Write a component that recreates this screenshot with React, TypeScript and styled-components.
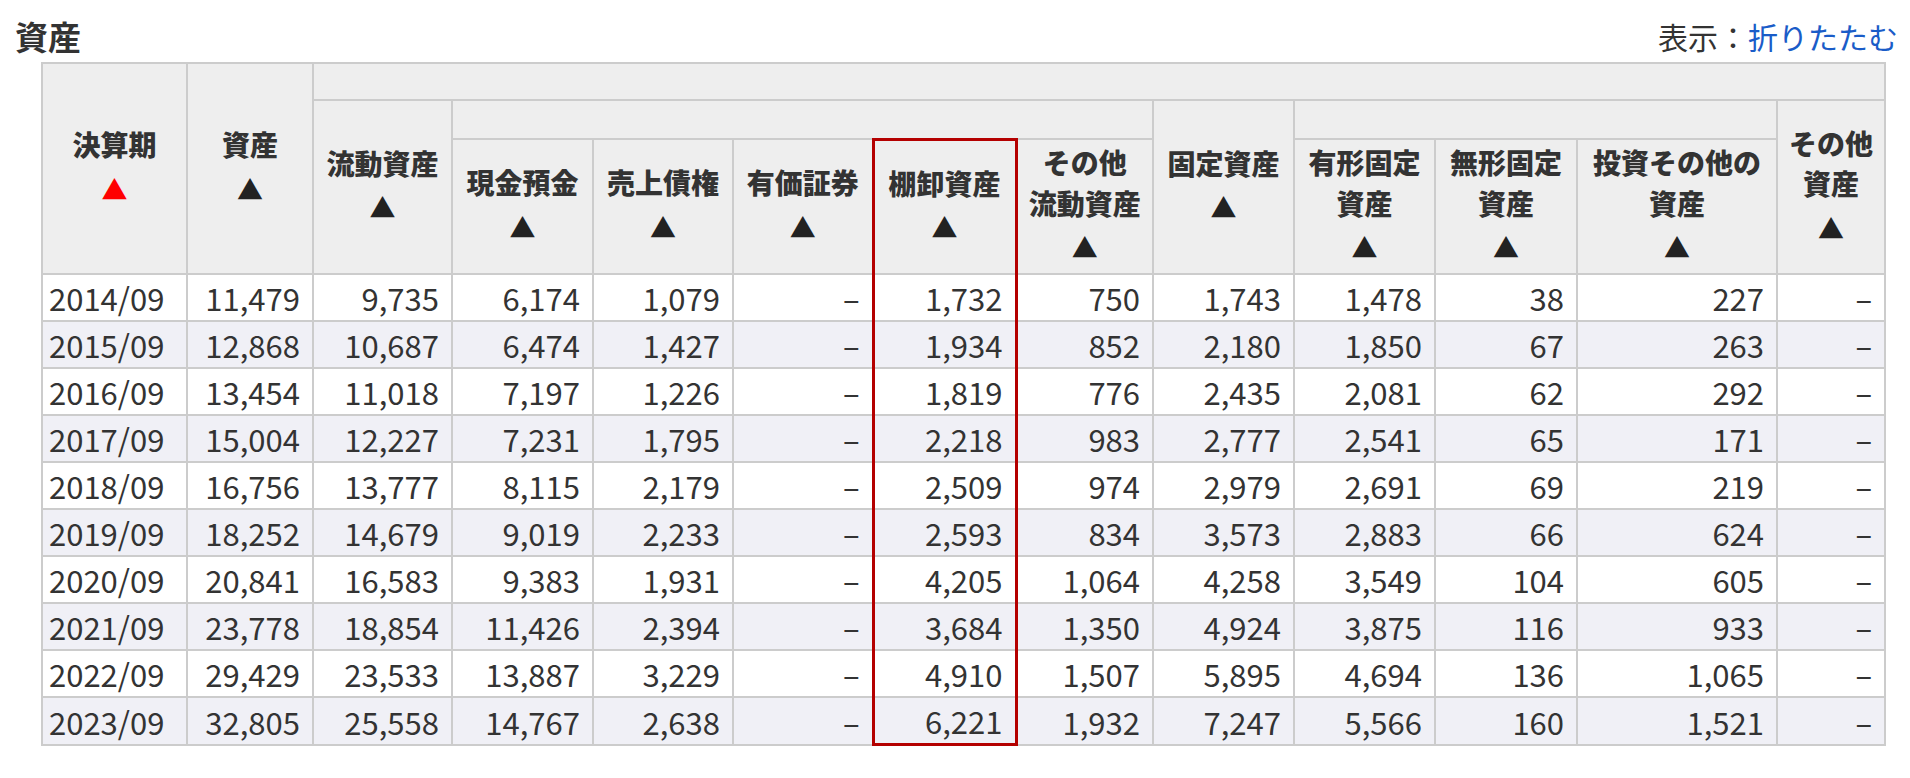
import React from "react";
import styled, { createGlobalStyle } from "styled-components";

const Global = createGlobalStyle`
  body { margin: 0; background: #fff; color: #333; font-family: "Noto Sans CJK JP", "Noto Sans", sans-serif; }
`;

const Page = styled.div`
  padding: 10px 12px 0 15px;
`;
const TitleBar = styled.div`
  display: flex;
  justify-content: space-between;
  align-items: center;
  height: 52px;
`;
const Title = styled.h2`
  margin: 0;
  font-size: 33px;
  font-weight: 700;
  color: #333;
`;
const Toggle = styled.div`
  font-size: 30px;
  color: #333;
  a { color: #1a5cc8; text-decoration: none; }
`;
const Table = styled.table`
  margin-left: 26px;
  border-collapse: collapse;
  width: 1843px;
  table-layout: fixed;
  font-size: 31px;
`;
const Th = styled.th<{ $red?: boolean }>`
  background: #eeeeee;
  border: 2px solid #cccccc;
  font-weight: 900;
  font-size: 28px;
  line-height: 1.45;
  color: #333;
  vertical-align: middle;
  padding: 2px 1px;
  white-space: nowrap;
  ${(p) => p.$red && `border: 3px solid #b40000; border-bottom: 2px solid #ccc;`}
`;
const Arrow = styled.span<{ $active?: boolean }>`
  display: block;
  color: ${(p) => (p.$active ? "#ff0000" : "#222")};
  font-size: 26px;
  line-height: 1.85;
`;
const Tr = styled.tr<{ $alt: boolean }>`
  background: ${(p) => (p.$alt ? "#f0f0f6" : "#ffffff")};
`;
const Td = styled.td<{ $red?: boolean; $last?: boolean; $left?: boolean }>`
  border: 2px solid #cccccc;
  height: 45px;
  padding: 0 12px 0 6px;
  text-align: ${(p) => (p.$left ? "left" : "right")};
  color: #333;
  white-space: nowrap;
  ${(p) => p.$red && `border-left: 3px solid #b40000; border-right: 3px solid #b40000;`}
  ${(p) => p.$red && p.$last && `border-bottom: 3px solid #b40000;`}
`;

const widths = [145, 126, 139, 141, 140, 140, 143, 137, 141, 141, 142, 200, 108];

const D = "–";
const rows = [
  ["2014/09","11,479","9,735","6,174","1,079",D,"1,732","750","1,743","1,478","38","227",D],
  ["2015/09","12,868","10,687","6,474","1,427",D,"1,934","852","2,180","1,850","67","263",D],
  ["2016/09","13,454","11,018","7,197","1,226",D,"1,819","776","2,435","2,081","62","292",D],
  ["2017/09","15,004","12,227","7,231","1,795",D,"2,218","983","2,777","2,541","65","171",D],
  ["2018/09","16,756","13,777","8,115","2,179",D,"2,509","974","2,979","2,691","69","219",D],
  ["2019/09","18,252","14,679","9,019","2,233",D,"2,593","834","3,573","2,883","66","624",D],
  ["2020/09","20,841","16,583","9,383","1,931",D,"4,205","1,064","4,258","3,549","104","605",D],
  ["2021/09","23,778","18,854","11,426","2,394",D,"3,684","1,350","4,924","3,875","116","933",D],
  ["2022/09","29,429","23,533","13,887","3,229",D,"4,910","1,507","5,895","4,694","136","1,065",D],
  ["2023/09","32,805","25,558","14,767","2,638",D,"6,221","1,932","7,247","5,566","160","1,521",D],
];

const H = ({ lines, active }: { lines: string[]; active?: boolean }) => (
  <>
    {lines.map((l, i) => (
      <div key={i}>{l}</div>
    ))}
    <Arrow $active={active}>▲</Arrow>
  </>
);

export default function App() {
  return (
    <Page>
      <Global />
      <TitleBar>
        <Title>資産</Title>
        <Toggle>
          表示：<a href="#">折りたたむ</a>
        </Toggle>
      </TitleBar>
      <Table>
        <colgroup>
          {widths.map((w, i) => (
            <col key={i} style={{ width: w }} />
          ))}
        </colgroup>
        <thead>
          <tr style={{ height: 37 }}>
            <Th rowSpan={3}><H lines={["決算期"]} active /></Th>
            <Th rowSpan={3}><H lines={["資産"]} /></Th>
            <Th colSpan={11}></Th>
          </tr>
          <tr style={{ height: 39 }}>
            <Th rowSpan={2}><H lines={["流動資産"]} /></Th>
            <Th colSpan={5}></Th>
            <Th rowSpan={2}><H lines={["固定資産"]} /></Th>
            <Th colSpan={3}></Th>
            <Th rowSpan={2}><H lines={["その他", "資産"]} /></Th>
          </tr>
          <tr style={{ height: 130 }}>
            <Th><H lines={["現金預金"]} /></Th>
            <Th><H lines={["売上債権"]} /></Th>
            <Th><H lines={["有価証券"]} /></Th>
            <Th $red><H lines={["棚卸資産"]} /></Th>
            <Th><H lines={["その他", "流動資産"]} /></Th>
            <Th><H lines={["有形固定", "資産"]} /></Th>
            <Th><H lines={["無形固定", "資産"]} /></Th>
            <Th><H lines={["投資その他の", "資産"]} /></Th>
          </tr>
        </thead>
        <tbody>
          {rows.map((r, i) => (
            <Tr key={i} $alt={i % 2 === 1}>
              {r.map((c, j) => (
                <Td key={j} $left={j === 0} $red={j === 6} $last={i === rows.length - 1}>
                  {c}
                </Td>
              ))}
            </Tr>
          ))}
        </tbody>
      </Table>
    </Page>
  );
}
